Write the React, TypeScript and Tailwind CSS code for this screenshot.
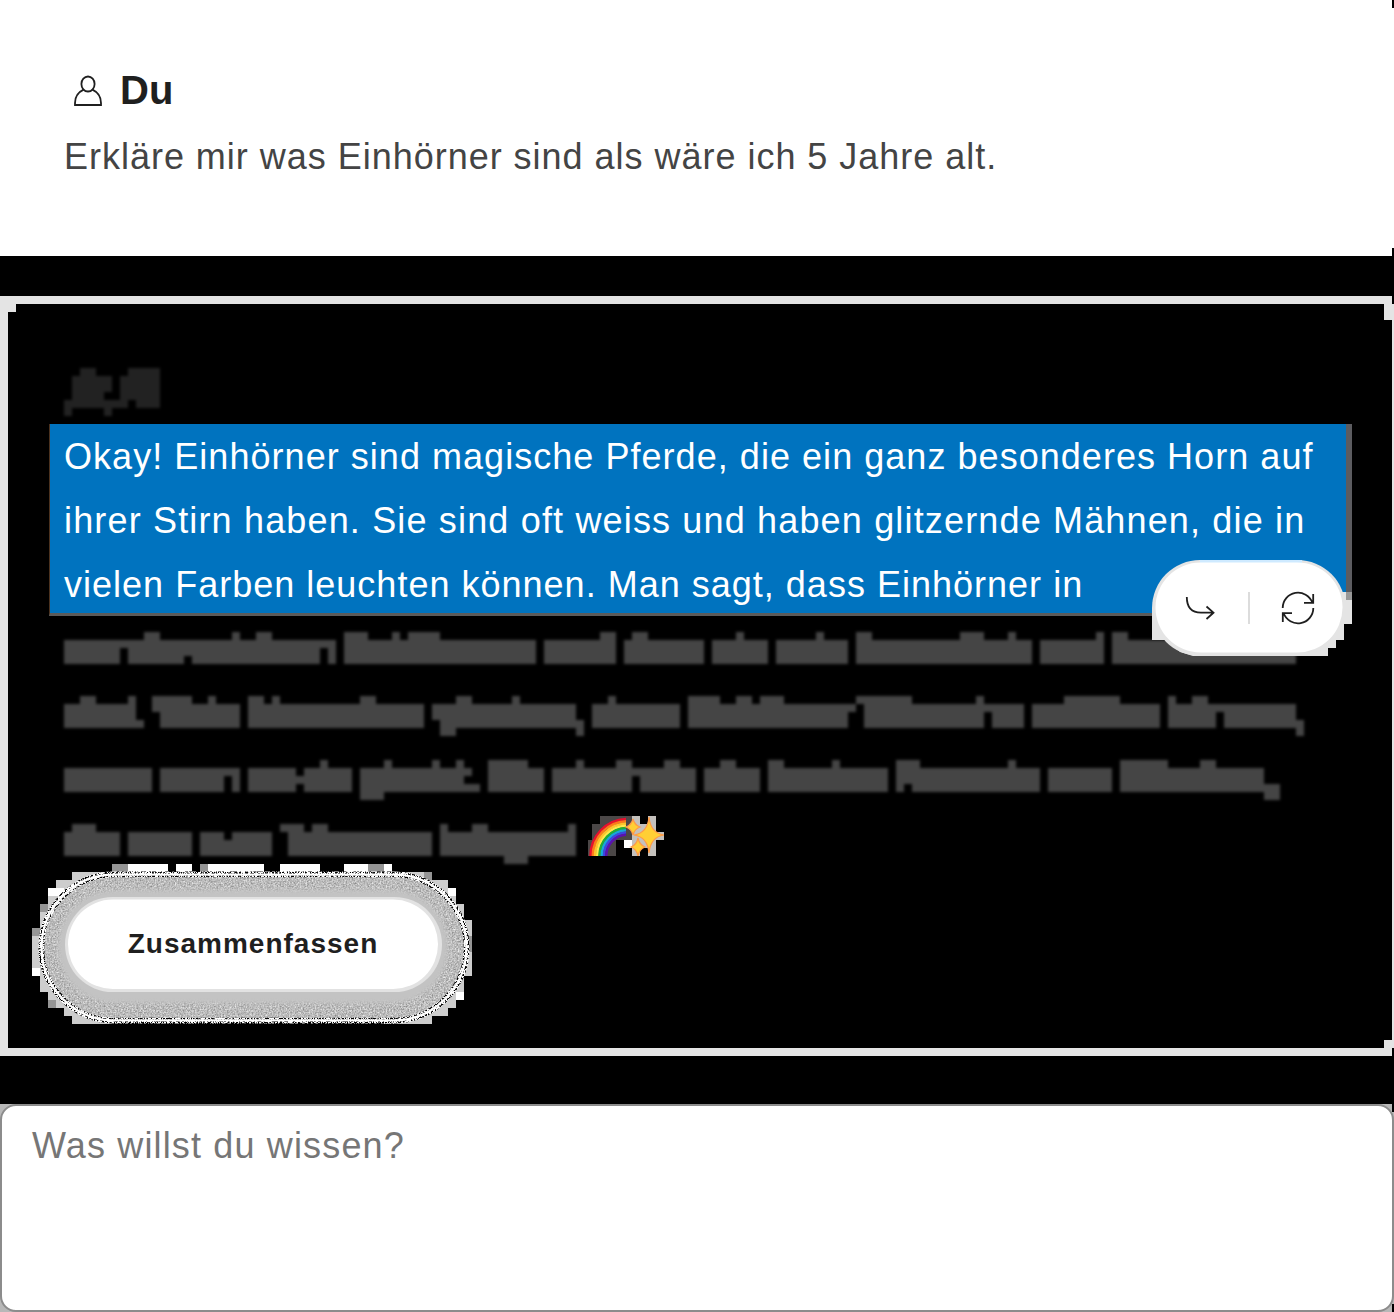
import React from "react";

const CELL = 8;

// Each string lists the filled column ranges of one 8px row.
function Blocks({ rows, height, className }: { rows: string[]; height: number; className: string }) {
  const d = rows
    .flatMap((row, y) =>
      row
        .split(" ")
        .filter(Boolean)
        .map((run) => {
          const [a, b = a] = run.split("-").map(Number);
          return `M${a * CELL} ${y * CELL}H${(b + 1) * CELL}V${(y + 1) * CELL}H${a * CELL}z`;
        }),
    )
    .join("");
  return (
    <svg width="1384" height={height} className={className} aria-hidden="true">
      <path d={d} fill="currentColor" />
    </svg>
  );
}

const heading = [
  "10-11 16-19",
  "9-13 15-19",
  "9-13 15-19",
  "9-12 15-19",
  "8-15 17-19",
  "8 13",
];

const lines: string[][] = [
  [
    "", "",
    "18-19 29 32-33 43-45 49 51-54 75-76 79-80 92 102 107-108 120-122 126 137 139-140",
    "8-41 43-66 68-76 78-87 89-95 97-105 107-128 130-137 139-161",
    "8-14 16-39 41 43-66 68-76 78-87 89-95 97-105 107-128 130-137 139-161",
    "8-14 16-22 24-39 41 43-66 68-76 78-87 89-95 97-105 107-128 130-137 139-161",
  ],
  [
    "", "",
    "10-11 16 19-23 26 31-32 34 45-46 57-58 64 76 86-89 92-93 95-97 107-113 122 133-139 146 149-150",
    "8-16 19-29 31-52 54-71 74-84 86-106 108-127 129-144 146-161",
    "8-16 20-29 31-52 54-71 74-84 86-105 108-122 124-127 129-144 146-151 153-161",
    "8-17 20-29 31-52 55-72 74-84 86-105 108-122 124-127 129-144 146-151 153-162",
    "55-56 72 162",
  ],
  [
    "", "",
    "40 48 54 57 61-65 72 77-78 83-84 90-91 96-97 104 112-114 126 140-145 150-151",
    "8-18 20-29 31-36 38-43 45-58 61-67 69-86 88-94 96-110 112-129 131-138 140-157",
    "8-18 20-27 29 31-43 45-57 61-67 69-78 80-86 88-94 96-110 112-129 131-138 140-157",
    "8-18 20-27 29 31-36 38-43 45-59 61-67 69-78 80-86 88-94 96-110 112 114-129 131-138 140-159",
    "45-47 158-159",
  ],
  [
    "", "",
    "9-11 35-37 39-40 55 59-60 71",
    "8-14 16-23 25-27 29-33 36-53 55-71",
    "8-14 16-23 25-33 36-53 55-71",
    "8-14 16-23 25-33 36-53 55-71",
    "63-65",
  ],
];

function PersonIcon() {
  return (
    <svg width="32" height="32" viewBox="0 0 32 32" fill="none" stroke="#1f1f1f" strokeWidth="1.8" className="relative top-px">
      <ellipse cx="16" cy="9" rx="6.600" ry="7.500" />
      <path d="M11.6 14.6C6.5 17 3 22 3 28v2h26V28c0-6-3.5-11-8.6-13.4" />
    </svg>
  );
}

function Emojis() {
  const arcs = ["#e8112d", "#ff7a1a", "#ffc229", "#ffe94a", "#1fae38", "#18a8d8", "#3b48e0", "#5a12b0"];
  const star = (x: number, y: number, w: number, h: number) =>
    `M${x} ${y - h}Q${x + 1.5} ${y - 2} ${x + w} ${y}Q${x + 1.5} ${y + 2} ${x} ${y + h}Q${x - 1.5} ${y + 2} ${x - w} ${y}Q${x - 1.5} ${y - 2} ${x} ${y - h}z`;
  return (
    <svg width="80" height="40" viewBox="584 816 80 40" className="absolute left-[584px] top-2" aria-label="🌈✨" role="img">
      <path d="M600 816h32v24h-16v16h-24v-32h8zM588 840h4v16h-4z" fill="#4b4747" />
      <path d="M624 840h8v8h-8z" fill="#fff" />
      <path d="M632 816h8v8h8v-8h8v16h8v8h-8v16h-8v-8h-8v8h-8z" fill="#c4c1bd" />
      {arcs.map((c, i) => {
        const r = 37 - i * 2.25;
        return <path key={c} d={`M${627.5 - r} 856A${r} ${r} 0 0 1 626 ${856 - r}`} fill="none" stroke={c} strokeWidth="2.5" />;
      })}
      <path d={star(649, 835, 15, 18) + star(633, 827, 7, 8) + star(638, 847, 7, 9)} fill="#ffcf35" stroke="#ff9a48" strokeWidth="1.2" />
    </svg>
  );
}

function ActionPill() {
  return (
    <div className="absolute left-[1144px] top-[256px] h-[96px] w-[200px]">
      <svg width="200" height="96" viewBox="1152 560 200 96" className="absolute inset-0" aria-hidden="true">
        <path d="M1152 608V640H1166L1180 652L1193 656H1328V648H1336V640H1344V624H1352V600H1346V592H1340Z" fill="#e4e4e4" />
        <path d="M1346 592h6v8h-6z" fill="#999" />
        <rect x="1152" y="560" width="193.500" height="96" rx="48" fill="#e4e4e4" />
        <path d="M1200 560h102v5h-102z" fill="#cfeaff" />
        <rect x="1155.500" y="562.500" width="187" height="90" rx="45" fill="#fff" />
      </svg>
      <svg width="200" height="96" viewBox="1152 560 200 96" className="absolute inset-0" fill="none" stroke="#1f1f1f" strokeWidth="1.8">
        <path d="M1186.800 597C1186.800 606 1190 612.700 1201 612.700H1213.500M1206.500 606.500L1213.500 612.700L1206.500 619" />
        <path d="M1249 592v32" stroke="#dcdcdc" strokeWidth="2" />
        <path d="M1282.700 608A15.300 15.300 0 0 1 1312.350 602.700M1313.200 594V602.800H1304M1313.300 608A15.300 15.300 0 0 1 1283.650 613.300M1282.800 622V613.200H1292" />
      </svg>
    </div>
  );
}

function SummaryButton() {
  return (
    <div className="relative h-[160px] w-[440px]">
      <svg width="440" height="160" viewBox="32 864 440 160" className="absolute inset-0" aria-hidden="true">
        <defs>
          <filter id="grain" x="0" y="0" width="1" height="1" colorInterpolationFilters="sRGB">
            <feTurbulence type="fractalNoise" baseFrequency="0.65" numOctaves="2" seed="4" />
            <feColorMatrix values="0.55 0 0 0 0.46  0.55 0 0 0 0.46  0.55 0 0 0 0.46  0 0 0 0 1" />
            <feComposite in2="SourceGraphic" operator="in" />
          </filter>
          <filter id="speckle" x="-.05" y="-.05" width="1.1" height="1.1" colorInterpolationFilters="sRGB">
            <feTurbulence type="fractalNoise" baseFrequency="0.7" numOctaves="1" seed="9" />
            <feColorMatrix values="12 0 0 0 -5.3  12 0 0 0 -5.3  12 0 0 0 -5.3  0 0 0 0 1" />
            <feComposite in2="SourceGraphic" operator="in" />
          </filter>
          <filter id="soft"><feGaussianBlur stdDeviation="2" /></filter>
        </defs>
        <path
          d="M72 872H432V880H448V888H456V904H464V920H472V976H464V1000H456V1008H448V1016H432V1024H72V1016H64V1008H48V992H40V976H32V928H40V904H48V888H56V880H72Z"
          fill="#cdcdcd"
        />
        <path d="M128 864h40v8h-40zM176 864h16v8h-16zM208 864h56v8h-56zM280 864h40v8h-40zM344 864h24v8h-24zM384 864h8v8h-8zM32 968h8v8h-8zM456 992h8v8h-8zM48 888h16v8h-16zM448 888h8v8h-8z" fill="#fff" />
        <path d="M112 864h16v8h-16zM200 864h8v8h-8zM368 864h16v8h-16zM424 872h8v8h-8zM32 928h8v8h-8zM464 936h8v16h-8zM40 904h8v8h-8zM48 1000h8v8h-8z" fill="#959595" />
        <path d="M112 872h272v4h-272zM112 1020h272v4h-272z" fill="#000" />
        <rect x="41" y="874" width="426" height="147" rx="73" fill="#bfbfbf" filter="url(#grain)" />
        <rect x="41" y="874" width="426" height="147" rx="73" fill="none" stroke="#fff" strokeWidth="3.500" />
        <rect x="39.500" y="872.500" width="429" height="150" rx="75" fill="none" stroke="#fff" strokeWidth="2" filter="url(#speckle)" />
        <rect x="43.500" y="876.500" width="421" height="142" rx="71" fill="none" stroke="#fff" strokeWidth="1.500" filter="url(#speckle)" />
        <rect x="58" y="890" width="390" height="113" rx="56" fill="#c3c3c3" filter="url(#soft)" />
        <rect x="65" y="897" width="377" height="95" rx="47.500" fill="#e2e2e2" />
        <rect x="68" y="899.500" width="370" height="89.500" rx="44.700" fill="#fff" />
      </svg>
      <button className="relative ml-8 mt-8 h-[96px] w-[378px] rounded-full text-[28px] font-bold tracking-[1px] text-[#1f1f1f]">
        Zusammenfassen
      </button>
    </div>
  );
}

export default function App() {
  return (
    <main className="relative flex h-[1312px] w-[1394px] flex-col overflow-hidden bg-black font-['Liberation_Sans',Arial,sans-serif]">
      <section className="h-[256px] shrink-0 bg-white px-16 pt-[58px]">
        <div className="flex h-16 items-center gap-4 pl-2">
          <PersonIcon />
          <h2 className="text-[40px] font-bold leading-[64px] text-[#1f1f1f]">Du</h2>
        </div>
        <p className="mt-[3px] whitespace-nowrap text-[36px] leading-[64px] tracking-[0.98px] text-[#444]">
          Erkläre mir was Einhörner sind als wäre ich 5 Jahre alt.
        </p>
      </section>

      <section className="relative mt-10 h-[760px] shrink-0 border-y-8 border-l-8 border-r-2 border-[#e4e4e4]">
        <span className="absolute left-0 top-0 size-2 bg-[#e4e4e4]" />
        <span className="absolute right-0 top-0 h-4 w-2 bg-[#e4e4e4]" />
        <span className="absolute bottom-0 right-0 size-2 bg-[#e4e4e4]" />
        <div className="-ml-2 flex h-[120px] flex-col pt-16">
          <Blocks rows={heading} height={48} className="block text-[#222] blur-[1.4px]" />
        </div>
        <p className="ml-[41px] h-[192px] w-[1303px] whitespace-nowrap border-b-[3px] border-l border-r-[6px] border-b-[#5b5b5b] border-l-[#4b321f] border-r-[#5c5c60] bg-[#0073bf] pl-[14px] pt-px text-[36px] leading-[64px] tracking-[1px] text-white">
          <span className="tracking-[1.04px]">Okay! Einhörner sind magische Pferde, die ein ganz besonderes Horn auf</span>
          <br />
          <span className="tracking-[1.16px]">ihrer Stirn haben. Sie sind oft weiss und haben glitzernde Mähnen, die in</span>
          <br />
          <span className="tracking-[1.01px]">vielen Farben leuchten können. Man sagt, dass Einhörner in</span>
        </p>
        <div className="-ml-2">
          {lines.map((rows, i) => (
            <div key={i} className="relative h-16">
              <Blocks rows={rows} height={64} className="block text-[#454545] blur-[1.4px]" />
              {i === 3 && <Emojis />}
            </div>
          ))}
        </div>
        <div className="-mt-2 ml-6">
          <SummaryButton />
        </div>
        <ActionPill />
      </section>

      <form className="mt-12 flex h-[208px] shrink-0 bg-[#b8b8b8]">
        <textarea
          aria-label="Frage"
          placeholder="Was willst du wissen?"
          className="h-full w-full resize-none rounded-[16px] border-2 border-[#8c8c8c] bg-white px-[30px] pt-[8px] text-[36px] leading-[64px] tracking-[1.15px] placeholder:text-[#767676]"
        />
      </form>

      <span className="absolute right-0 top-0 h-2 w-[2px] bg-black" />
      <span className="absolute right-0 top-[248px] h-[56px] w-[2px] bg-black" />
      <span className="absolute right-0 top-[1048px] h-[64px] w-[2px] bg-black" />
      <span className="absolute bottom-0 right-0 h-2 w-[2px] bg-black" />
    </main>
  );
}
